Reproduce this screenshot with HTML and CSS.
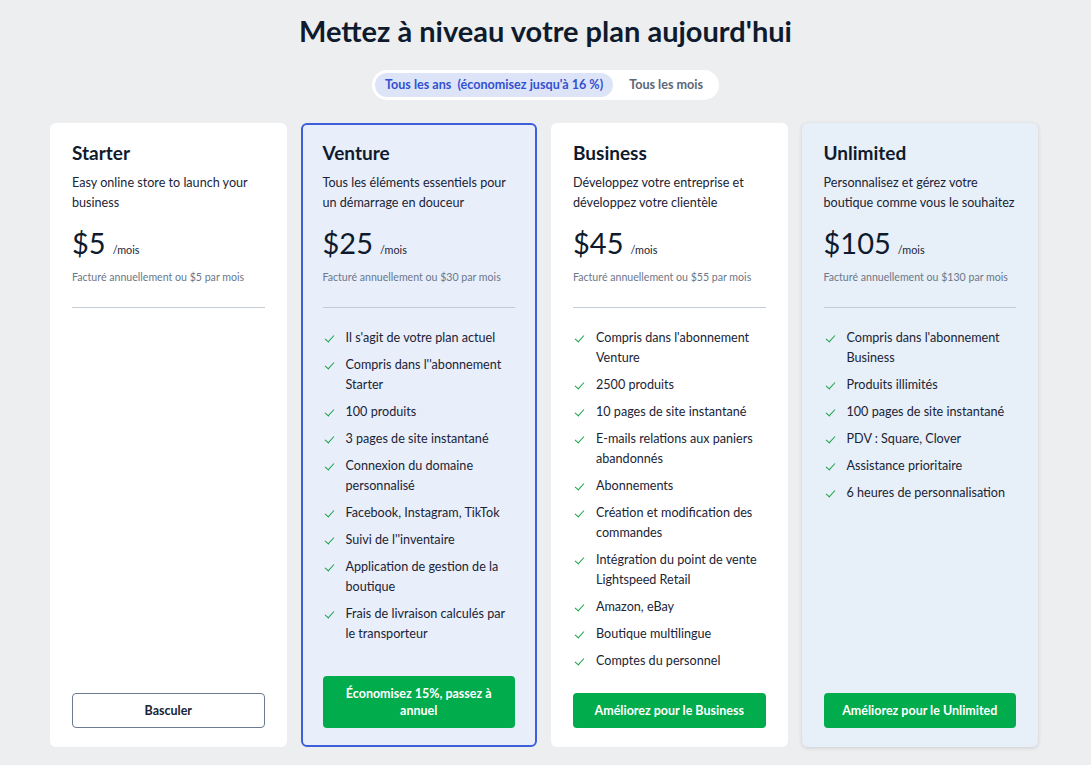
FILE: index.html
```html
<!DOCTYPE html>
<html lang="fr">
<head>
    <meta charset="UTF-8">
    <meta name="viewport" content="width=device-width, initial-scale=1.0">
    <title>Mettez à niveau votre plan</title>
    <link rel="stylesheet" href="styles.css">
</head>
<body>

    <h1 class="page-title">Mettez à niveau votre plan aujourd'hui</h1>

    <div class="toggle-wrap">
        <div class="toggle">
            <span class="toggle-opt active">Tous les ans &nbsp;(économisez jusqu'à 16 %)</span>
            <span class="toggle-opt">Tous les mois</span>
        </div>
    </div>

    <div class="plans">

        <div class="plan">
            <h2>Starter</h2>
            <p class="desc">Easy online store to launch your business</p>
            <div class="price"><span class="amount">$5</span><span class="per">/mois</span></div>
            <p class="billed">Facturé annuellement ou $5 par mois</p>
            <hr>
            <ul class="features"></ul>
            <a href="#" class="btn btn-outline">Basculer</a>
        </div>

        <div class="plan current">
            <h2>Venture</h2>
            <p class="desc">Tous les éléments essentiels pour un démarrage en douceur</p>
            <div class="price"><span class="amount">$25</span><span class="per">/mois</span></div>
            <p class="billed">Facturé annuellement ou $30 par mois</p>
            <hr>
            <ul class="features">
                <li>Il s'agit de votre plan actuel</li>
                <li>Compris dans l''abonnement Starter</li>
                <li>100 produits</li>
                <li>3 pages de site instantané</li>
                <li>Connexion du domaine personnalisé</li>
                <li>Facebook, Instagram, TikTok</li>
                <li>Suivi de l''inventaire</li>
                <li>Application de gestion de la boutique</li>
                <li>Frais de livraison calculés par le transporteur</li>
            </ul>
            <a href="#" class="btn">Économisez 15%, passez à annuel</a>
        </div>

        <div class="plan">
            <h2>Business</h2>
            <p class="desc">Développez votre entreprise et développez votre clientèle</p>
            <div class="price"><span class="amount">$45</span><span class="per">/mois</span></div>
            <p class="billed">Facturé annuellement ou $55 par mois</p>
            <hr>
            <ul class="features">
                <li>Compris dans l'abonnement Venture</li>
                <li>2500 produits</li>
                <li>10 pages de site instantané</li>
                <li>E-mails relations aux paniers abandonnés</li>
                <li>Abonnements</li>
                <li>Création et modification des commandes</li>
                <li>Intégration du point de vente Lightspeed Retail</li>
                <li>Amazon, eBay</li>
                <li>Boutique multilingue</li>
                <li>Comptes du personnel</li>
            </ul>
            <a href="#" class="btn">Améliorez pour le Business</a>
        </div>

        <div class="plan featured">
            <h2>Unlimited</h2>
            <p class="desc">Personnalisez et gérez votre boutique comme vous le souhaitez</p>
            <div class="price"><span class="amount">$105</span><span class="per">/mois</span></div>
            <p class="billed">Facturé annuellement ou $130 par mois</p>
            <hr>
            <ul class="features">
                <li>Compris dans l'abonnement Business</li>
                <li>Produits illimités</li>
                <li>100 pages de site instantané</li>
                <li>PDV : Square, Clover</li>
                <li>Assistance prioritaire</li>
                <li>6 heures de personnalisation</li>
            </ul>
            <a href="#" class="btn">Améliorez pour le Unlimited</a>
        </div>

    </div>

</body>
</html>
```

FILE: styles.css
```css
body {
    font-family: Lato, 'Noto Sans', sans-serif;
    margin: 0;
    padding: 0;
    background-color: #edeef0;
    color: #1a2436;
}

.page-title {
    margin: 13px 0 0;
    text-align: center;
    font-size: 29px;
    line-height: 35px;
    font-weight: 700;
    color: #0f1b2d;
}

.toggle-wrap {
    display: flex;
    justify-content: center;
    margin-top: 22px;
}

.toggle {
    display: flex;
    align-items: center;
    background-color: white;
    border-radius: 15px;
    padding: 3px;
    height: 24px;
}

.toggle-opt {
    padding: 0 10px;
    height: 24px;
    line-height: 24px;
    border-radius: 12px;
    font-size: 12.6px;
    font-weight: 700;
    color: #5b6678;
}

.toggle-opt:last-child {
    padding: 0 13px 0 16px;
}

.toggle-opt.active {
    background-color: #dde4f7;
    color: #3451d1;
}

.plans {
    width: 988px;
    margin: 23px 0 18px 50px;
    display: grid;
    grid-template-columns: repeat(4, 1fr);
    gap: 14px;
}

.plan {
    display: flex;
    flex-direction: column;
    background-color: white;
    border: 2px solid transparent;
    border-radius: 6px;
    padding: 16px 20px 17px;
    min-height: 587px;
}

.plan.current {
    background-color: #e8eefa;
    border-color: #3d5fd9;
}

.plan.featured {
    background-color: #e7eff8;
    box-shadow: 0 1px 4px rgba(20, 30, 50, 0.15);
}

.plan h2 {
    margin: 0;
    font-size: 19px;
    line-height: 24px;
    font-weight: 700;
    color: #0f1b2d;
}

.desc {
    margin: 8px 0 0;
    font-size: 12.6px;
    line-height: 20px;
}

.price {
    display: flex;
    align-items: baseline;
    margin-top: 12px;
    height: 36px;
}

.amount {
    font-size: 29px;
    line-height: 36px;
    color: #0f1b2d;
}

.per {
    margin-left: 7px;
    font-size: 10.8px;
}

.billed {
    margin: 8px 0 0;
    font-size: 10.6px;
    line-height: 16px;
    color: #6b778a;
}

hr {
    margin: 22px 0 0;
    border: 0;
    border-top: 1px solid #c6ccd4;
}

.features {
    list-style: none;
    margin: 20px 0 0;
    padding: 0;
}

.features li {
    position: relative;
    padding-left: 23px;
    margin-bottom: 7px;
    font-size: 12.6px;
    line-height: 20px;
}

.features li::before {
    content: "";
    position: absolute;
    left: 4px;
    top: 5px;
    width: 4px;
    height: 8px;
    border-right: 1.5px solid #18a34a;
    border-bottom: 1.5px solid #18a34a;
    transform: rotate(42deg);
}

.btn {
    display: block;
    margin-top: auto;
    padding: 9px 16px;
    min-height: 17px;
    background-color: #00ac4b;
    color: white;
    text-align: center;
    text-decoration: none;
    border-radius: 4px;
    font-size: 12.5px;
    line-height: 17px;
    font-weight: 700;
}

.btn-outline {
    background-color: white;
    color: #1a2436;
    border: 1px solid #6b7a90;
    padding: 8px 16px;
}
```
